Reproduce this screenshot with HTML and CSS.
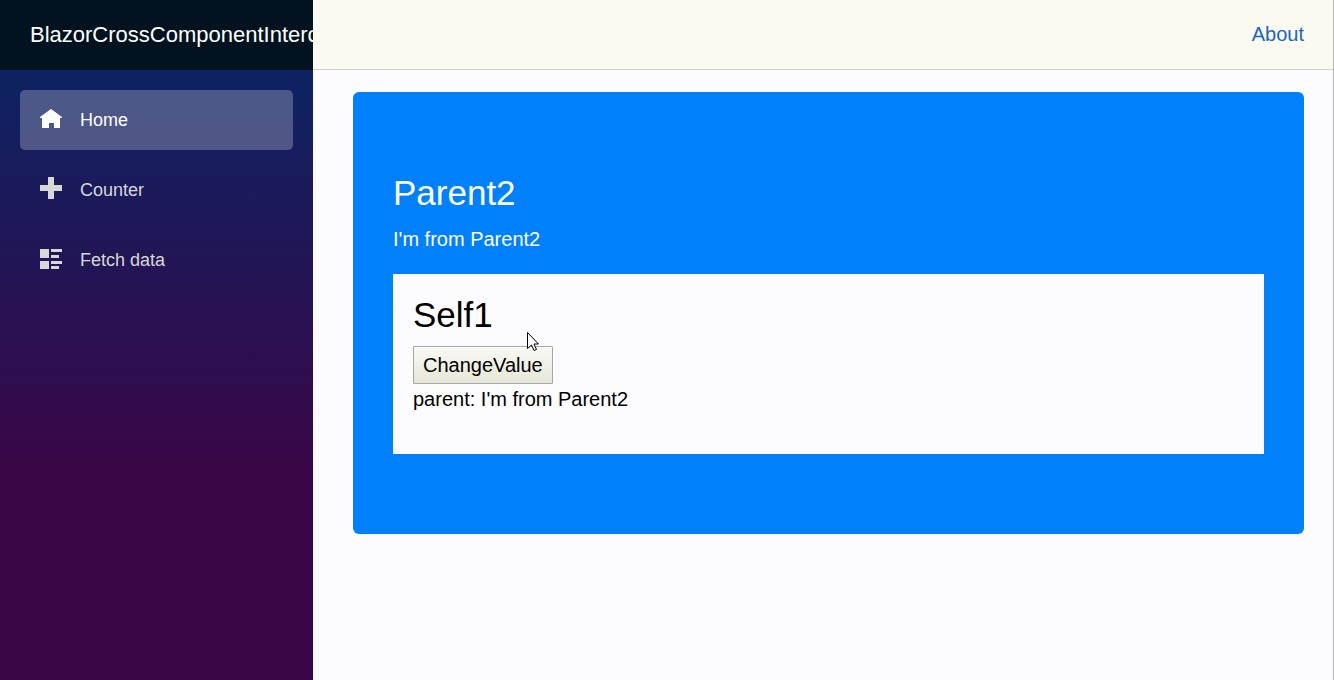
FILE: index.html
```html
<!DOCTYPE html>
<html lang="en">
<head>
<meta charset="utf-8">
<meta name="viewport" content="width=device-width, initial-scale=1">
<title>BlazorCrossComponentInteroperation</title>
<link rel="stylesheet" href="styles.css">
</head>
<body>
<div class="app">
  <aside class="sidebar">
    <div class="brand-row"><a class="brand" href="#">BlazorCrossComponentInterc</a></div>
    <nav class="nav">
      <a class="nav-link active" href="#">
        <svg class="icon" viewBox="0 0 22 22" aria-hidden="true"><path d="M11 0 22 8v1h-2v10h-6v-5H9v5H2V9H0V8z"/></svg>
        Home
      </a>
      <a class="nav-link" href="#">
        <svg class="icon" viewBox="0 0 22 22" aria-hidden="true"><path d="M8-2h6v8h8v6h-8v8H8v-8H0V6h8z"/></svg>
        Counter
      </a>
      <a class="nav-link" href="#">
        <svg class="icon" viewBox="0 0 22 22" aria-hidden="true"><path d="M0 0h9v9H0zM0 12h9v8H0zM11 0h11v3H11zM11 6h8v3h-8zM11 12h11v3H11zM11 17h8v3h-8z"/></svg>
        Fetch data
      </a>
    </nav>
  </aside>
  <div class="main">
    <header class="top-bar"><a class="about" href="#">About</a></header>
    <main class="content">
      <section class="jumbotron">
        <h3 class="title">Parent2</h3>
        <p class="text">I'm from Parent2</p>
        <div class="child">
          <h3 class="title">Self1</h3>
          <button class="change" type="button">ChangeValue</button>
          <p class="text">parent: I'm from Parent2</p>
          <svg class="cursor" viewBox="0 0 12 20" aria-hidden="true"><path d="M.5.5v16l4-3.500 2.500 5.500 2.500-1-2.500-5.500h4.500z"/></svg>
        </div>
      </section>
    </main>
  </div>
</div>
</body>
</html>
```
FILE: styles.css
```css
* {
  box-sizing: border-box;
}

body {
  margin: 0;
  background: #fcfcff;
  color: #000;
  font: 20px/30px "Liberation Sans", Arial, sans-serif;
}

.app {
  display: flex;
  min-height: 100vh;
}

.sidebar {
  flex: 0 0 313px;
  min-width: 0;
  overflow: hidden;
  background: linear-gradient(180deg, #052767 0%, #3a0647 70%);
}

.brand-row {
  display: flex;
  align-items: center;
  height: 70px;
  padding-left: 30px;
  background: #02131f;
}

.brand {
  color: #fff;
  font-size: 22px;
  text-decoration: none;
  white-space: nowrap;
}

.nav {
  display: flex;
  flex-direction: column;
  gap: 10px;
  padding: 20px;
}

.nav-link {
  display: flex;
  align-items: center;
  gap: 18px;
  height: 60px;
  padding: 0 20px;
  border-radius: 5px;
  color: #d7d7d7;
  font-size: 18px;
  text-decoration: none;
}

.nav-link.active {
  background: rgba(255, 255, 255, 0.25);
  color: #fff;
}

.icon {
  flex: none;
  width: 22px;
  height: 22px;
  overflow: visible;
  fill: currentColor;
}

.main {
  flex: 1;
  min-width: 0;
  border-right: 1px solid #b5b5b5;
}

.top-bar {
  display: flex;
  align-items: center;
  justify-content: flex-end;
  height: 70px;
  padding: 0 29px 2px 0;
  border-bottom: 1px solid #d0d0d4;
  background: #fafaf0;
}

.about {
  color: #1b66c0;
  text-decoration: none;
}

.content {
  padding: 22px 29px 40px 40px;
}

.jumbotron {
  padding: 80px 40px;
  border-radius: 6px;
  background: #0080fa;
  color: #fff;
}

.title {
  margin: 0 0 10px;
  font-size: 35px;
  font-weight: 500;
  line-height: 42px;
}

.text {
  margin: 0 0 20px;
}

.child {
  position: relative;
  display: flow-root;
  padding: 20px;
  background: #fcfcff;
  color: #000;
}

.change {
  display: block;
  height: 38px;
  padding: 0 9px;
  border: 1px solid #a6a6a6;
  border-radius: 1px;
  background: linear-gradient(#fafaf6, #e6e6d8);
  color: #000;
  font: inherit;
}

.cursor {
  position: absolute;
  top: 58px;
  left: 134px;
  width: 12px;
  height: 20px;
  fill: #fff;
  stroke: #000;
}
```
